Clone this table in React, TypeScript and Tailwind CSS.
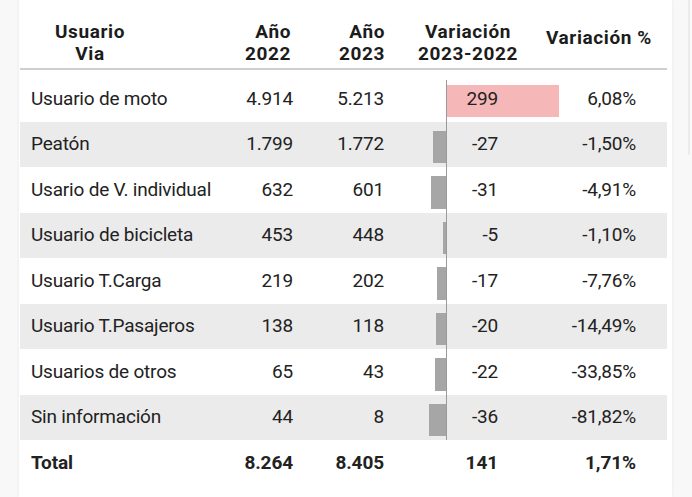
import React from "react"

type Row = { label: string; y22: string; y23: string; diff: number; pct: string }

const rows: Row[] = [
  { label: "Usuario de moto", y22: "4.914", y23: "5.213", diff: 299, pct: "6,08%" },
  { label: "Peatón", y22: "1.799", y23: "1.772", diff: -27, pct: "-1,50%" },
  { label: "Usario de V. individual", y22: "632", y23: "601", diff: -31, pct: "-4,91%" },
  { label: "Usuario de bicicleta", y22: "453", y23: "448", diff: -5, pct: "-1,10%" },
  { label: "Usuario T.Carga", y22: "219", y23: "202", diff: -17, pct: "-7,76%" },
  { label: "Usuario T.Pasajeros", y22: "138", y23: "118", diff: -20, pct: "-14,49%" },
  { label: "Usuarios de otros", y22: "65", y23: "43", diff: -22, pct: "-33,85%" },
  { label: "Sin información", y22: "44", y23: "8", diff: -36, pct: "-81,82%" },
]

// bar widths in px, measured off the chart
function barWidth(v: number) {
  if (v > 0) return Math.round(v * 0.375)
  return Math.round(Math.abs(v) * 0.45) + 1
}

export default function App() {
  return (
    <div className="min-h-[497px] bg-[#f8f8f8] flex font-['Roboto',sans-serif] text-[#222]">
      <div className="ml-[19px] w-[653px] bg-white shadow-[0_0_4px_rgba(0,0,0,0.06)] pl-px pr-[5px]">
        {/* header */}
        <div className="h-[70px] flex items-end pb-[3px] border-b-2 border-[#cfcfcf] font-bold text-[19px] leading-[22px] tracking-[0.6px] text-[#1c1c1c]">
          <div className="w-[140px] text-center">
            Usuario
            <br />
            Via
          </div>
          <div className="w-[131px] text-right">
            Año
            <br />
            2022
          </div>
          <div className="w-[94px] text-right">
            Año
            <br />
            2023
          </div>
          <div className="w-[166px] text-center">
            Variación
            <br />
            2023-2022
          </div>
          <div className="w-[96px] flex justify-center whitespace-nowrap self-center translate-y-[5px]">
            Variación %
          </div>
        </div>

        <div className="pt-[6px] text-[19px] tracking-[-0.2px]">
          {rows.map((r, i) => (
            <div
              key={r.label}
              className={`h-[45.5px] flex items-center ${i % 2 === 1 ? "bg-[#ebebeb]" : "bg-white"}`}
            >
              <div className="w-[190px] pl-[11px] whitespace-nowrap">{r.label}</div>
              <div className="w-[83px] text-right">{r.y22}</div>
              <div className="w-[91px] text-right">{r.y23}</div>
              <div className="relative w-[62px] self-stretch">
                {r.diff < 0 && (
                  <div
                    className="absolute right-0 top-[9px] bottom-[4px] bg-[#a6a6a6]"
                    style={{ width: barWidth(r.diff) }}
                  />
                )}
              </div>
              <div className="relative w-[112px] self-stretch flex items-center justify-end pr-[60px]">
                <div className={`absolute left-0 bottom-0 w-px bg-[#9a9a9a] ${i === 0 ? "top-[4px]" : "top-0"}`} />
                {r.diff > 0 && (
                  <div
                    className="absolute left-px top-[9px] bottom-[5px] bg-[#f5b7b7]"
                    style={{ width: barWidth(r.diff) }}
                  />
                )}
                <span className="relative">{r.diff}</span>
              </div>
              <div className="w-[109px] text-right pr-[31px]">{r.pct}</div>
            </div>
          ))}

          {/* total */}
          <div className="h-[46px] flex items-center font-bold tracking-[-0.1px]">
            <div className="w-[190px] pl-[11px]">Total</div>
            <div className="w-[83px] text-right">8.264</div>
            <div className="w-[91px] text-right">8.405</div>
            <div className="w-[62px]" />
            <div className="w-[112px] text-right pr-[60px]">141</div>
            <div className="w-[109px] text-right pr-[31px]">1,71%</div>
          </div>
        </div>
      </div>
      <div className="ml-[16px] w-[4px] h-[155px] border-l-2 border-[#ececec]" />
    </div>
  )
}
